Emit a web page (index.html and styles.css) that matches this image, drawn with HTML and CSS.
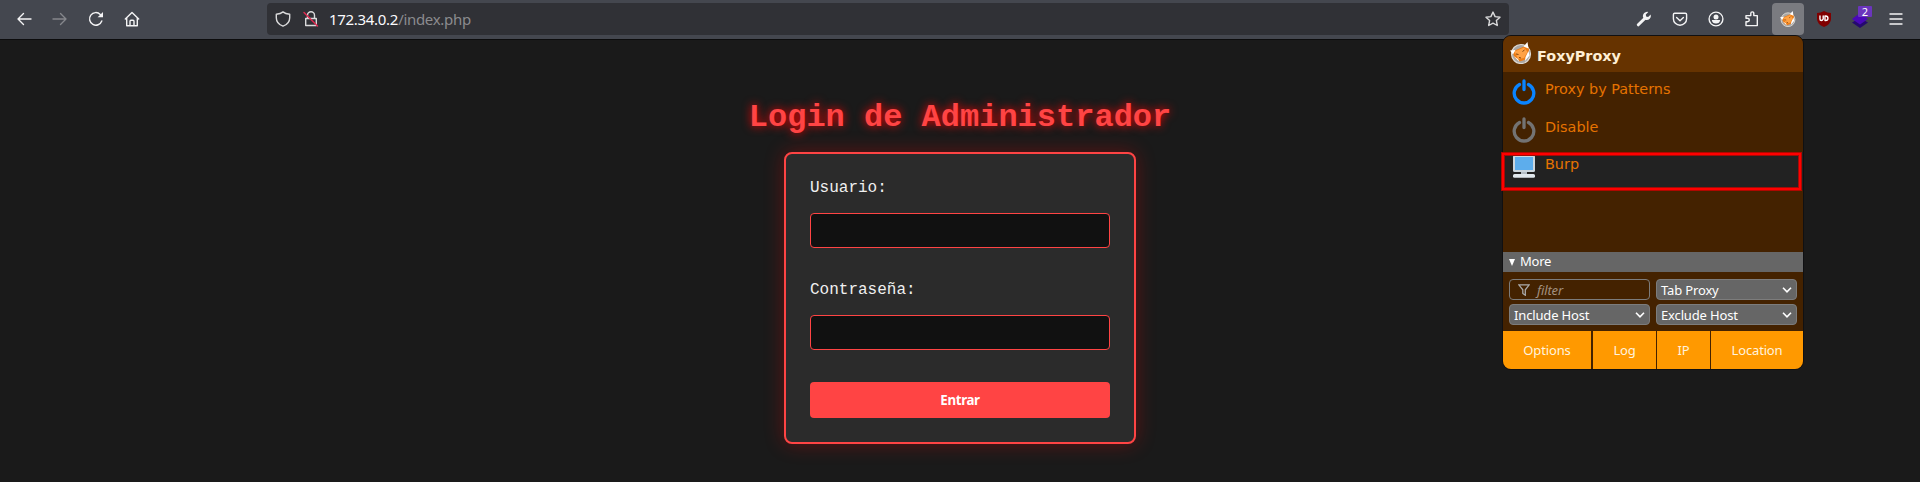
FILE: index.html
```html
<!DOCTYPE html>
<html lang="es">
<head>
<meta charset="utf-8">
<title>Login de Administrador</title>
<link rel="stylesheet" href="styles.css">
</head>
<body>
<header class="toolbar">
  <nav class="nav">
    <svg class="ico" viewBox="0 0 16 16"><path d="M15 8H2M7.500 2.500L2 8l5.500 5.500"/></svg>
    <svg class="ico dim" viewBox="0 0 16 16"><path d="M1 8h13M8.500 2.500L14 8l-5.500 5.500"/></svg>
    <svg class="ico" viewBox="0 0 16 16"><path d="M13.800 10A6.300 6.300 0 1 1 12.300 3.400"/><path class="solid" d="M15 1v5.200H9.600z"/></svg>
    <svg class="ico" viewBox="0 0 16 16"><path d="M1.300 8L8 1.500 14.700 8M2.700 7v7.700h10.600V7M6 14.500V10.300q0-1 1-1h2q1 0 1 1v4.200"/></svg>
  </nav>
  <div class="urlbar">
    <svg class="ico" viewBox="0 0 16 16"><path d="M8 .9C6 2.600 4 3 1.300 3.300v3.500C1.300 11 4 13.800 8 15.200c4-1.400 6.700-4.200 6.700-8.400V3.300C12 3 10 2.600 8 .9z"/></svg>
    <svg class="ico lock" viewBox="0 0 16 16"><path d="M4.500 7V4.300a3.500 3.500 0 0 1 7 0V7M2.700 7.500h10.600v7H2.700z"/><path class="strike" d="M1 1.500l13.500 13.500"/></svg>
    <span class="url">172.34.0.2<span class="path">/index.php</span></span>
    <svg class="ico star" viewBox="0 0 16 16"><path d="M8 1.100l2.100 4.500 4.900.6-3.600 3.400.9 4.900L8 12.100l-4.300 2.400.9-4.900L1 6.200l4.900-.6z"/></svg>
  </div>
  <div class="tools">
    <svg class="ico" viewBox="0 0 16 16"><path class="wrench" d="M2.300 13.800L9 7.200"/><path class="solid" d="M14.700 3.600l-2.600 2.300-2-.3-.3-2L12.300 1A4.300 4.300 0 0 0 7 6.200L9.700 9a4.300 4.300 0 0 0 5-5.400z"/></svg>
    <svg class="ico" viewBox="0 0 16 16"><path d="M2.700 2.200h10.600q1.300 0 1.300 1.300v4.200a6.600 6.600 0 0 1-13.200 0V3.500q0-1.300 1.300-1.300zM4.600 6.500L8 9.700l3.400-3.200"/></svg>
    <svg class="ico" viewBox="0 0 16 16"><circle cx="8" cy="8" r="6.900"/><circle class="solid" cx="8" cy="6" r="2.500"/><path class="solid" d="M3.800 9h8.400q-.5 3.500-4.200 3.500T3.800 9z"/></svg>
    <svg class="ico" viewBox="0 0 16 16"><path d="M2 14.600h11.300V4.600H9.800V2.400q0-1.500-1.500-1.500T6.800 2.400v2.200H2v2.700h1.500q1.800 0 1.800 1.700t-1.800 1.700H2z"/></svg>
    <span class="active-tool"><svg class="fox" viewBox="0 0 22 22"><use href="#fox"/></svg></span>
    <svg class="ico" viewBox="0 0 16 16"><path fill="#800000" stroke="none" d="M8 0q3 1.800 7 2v6q0 5-7 8-7-3-7-8V2q4-.2 7-2z"/><path class="ub" d="M4 5v3q0 1.500 1.300 1.500T7.200 8V5M9 5v4.500h.7A2.200 2.200 0 0 0 9.700 5z"/></svg>
    <span class="layers"><svg class="ico" viewBox="0 0 16 16"><path fill="#25096f" stroke="none" d="M0 11.500L8 7l8 4.500L8 17z"/><path fill="#4a08b8" stroke="none" d="M0 8l8-6 8 6-8 5.500z"/></svg><b class="badge">2</b></span>
    <svg class="ico" viewBox="0 0 16 16"><path d="M2 3h12M2 8h12M2 13h12"/></svg>
  </div>
</header>

<main class="page">
  <h1 class="title">Login de Administrador</h1>
  <form class="card">
    <label class="label" for="user">Usuario:</label>
    <input class="field" id="user" type="text">
    <label class="label" for="pass">Contraseña:</label>
    <input class="field" id="pass" type="password">
    <button class="submit" type="button">Entrar</button>
  </form>
</main>

<aside class="panel">
  <div class="panel-head">
    <svg class="fox" viewBox="0 0 22 22">
      <g id="fox">
        <circle cx="11" cy="12" r="9.500" fill="#a9a6a3"/>
        <circle cx="11" cy="12" r="9.500" fill="none" stroke="#dedbd6" stroke-width="1.200"/>
        <path fill="#ee7d16" d="M2 9.500l5-2L14 4.500l3.500-2 1.500 5-.5 6-4 4.500-5 1.500L5 16z"/>
        <path fill="#ffa245" d="M4.500 9.500l9.500-4 3.500 4.500-3.500 6-6 1z"/>
        <path fill="#fff" d="M0 8.500l5.500-.5L3 12.500zM13.500 4.500L17.500 0l1 6.500zM18.500 9l1 4.500-4.500 5.500.5-4zM3.500 14l4.500 3 1.500 3z"/>
        <path fill="none" stroke="#85450c" stroke-width="1" d="M6 12l2.500.5M12.500 9.500l2-1.500M9 15.500l2 .5"/>
      </g>
    </svg>
    <span>FoxyProxy</span>
  </div>
  <ul class="proxies">
    <li class="proxy"><svg class="power blue" viewBox="0 0 24 24"><path d="M7.500 4.500a9.800 9.800 0 1 0 9 0M12 1v8.500"/></svg><span>Proxy by Patterns</span></li>
    <li class="proxy"><svg class="power gray" viewBox="0 0 24 24"><path d="M7.500 4.500a9.800 9.800 0 1 0 9 0M12 1v8.500"/></svg><span>Disable</span></li>
    <li class="proxy selected"><svg class="power pc" viewBox="0 0 24 24"><rect x="1" y="0" width="22" height="17" rx="1.500" fill="#ccd6dd"/><rect x="3" y="2" width="18" height="13" fill="#5dadec"/><path fill="#b5bec5" d="M9 17h6v3H9z"/><rect x="1" y="19" width="22" height="3.700" rx="1.500" fill="#e1e8ed"/></svg><span>Burp</span></li>
  </ul>
  <div class="more"><svg class="tri" viewBox="0 0 6 7"><path d="M0 0h6L3 7z"/></svg><span>More</span></div>
  <div class="controls">
    <div class="control filter"><svg class="funnel" viewBox="0 0 12 12"><path d="M.8.800h10.400L7.300 5.800v5.400L4.800 9.500V5.800z"/></svg>filter</div>
    <div class="control">Tab Proxy<svg class="chev" viewBox="0 0 10 6"><path d="M1 .8l4 4 4-4"/></svg></div>
    <div class="control">Include Host<svg class="chev" viewBox="0 0 10 6"><path d="M1 .8l4 4 4-4"/></svg></div>
    <div class="control">Exclude Host<svg class="chev" viewBox="0 0 10 6"><path d="M1 .8l4 4 4-4"/></svg></div>
  </div>
  <div class="actions"><span>Options</span><span>Log</span><span>IP</span><span>Location</span></div>
  <div class="marker"></div>
</aside>
</body>
</html>
```

FILE: styles.css
```css
* { box-sizing: border-box; }
body { margin: 0; height: 482px; overflow: hidden; background: #1a1a1a; font-family: "Noto Sans", sans-serif; }
svg { display: block; flex: none; }
.toolbar { height: 40px; background: #44474f; border-bottom: 1px solid #0c0c0d; display: flex; padding-top: 3px; }
.nav { display: flex; align-items: center; gap: 20px; height: 32px; width: 267px; padding-left: 16px; }
.ico { width: 16px; height: 16px; fill: none; stroke: #f4f4f5; stroke-width: 1.4; stroke-linecap: round; stroke-linejoin: round; overflow: visible; }
.dim { stroke: #85878c; }
.solid { fill: #f4f4f5; stroke: none; }
.wrench { stroke-width: 3; }
.ub { stroke: #fff; stroke-width: 1.4; }
.urlbar { width: 1242px; height: 32px; background: #303136; border-radius: 4px; display: flex; align-items: center; padding: 0 8px; }
.urlbar .ico { stroke: #dadadb; }
.lock { margin-left: 12px; }
.urlbar .strike { stroke: #e22850; }
.url { color: #fbfbfe; font-size: 15px; letter-spacing: -.3px; margin-left: 10px; line-height: 32px; }
.path { color: #8b8b8e; }
.star { margin-left: auto; }
.tools { display: flex; align-items: center; gap: 20px; height: 32px; margin-left: 127px; }
.active-tool { width: 32px; height: 32px; background: #7a7b80; border-radius: 4px; margin: 0 -8px; display: grid; place-items: center; }
.active-tool .fox { width: 16px; height: 16px; }
.layers { position: relative; }
.badge { position: absolute; left: 6px; top: -5px; width: 14px; height: 11px; background: #6b35bd; color: #fff; font-size: 11px; line-height: 12px; font-weight: 400; text-align: center; border-radius: 1px; }

.page { display: flex; flex-direction: column; align-items: center; padding-top: 60px; }
.title { margin: 0 0 16px; font: bold 32px/36px "Liberation Mono", monospace; color: #ff4444; text-shadow: 0 0 10px #ff0000; }
.card { width: 352px; height: 292px; border: 2px solid #ff4444; border-radius: 8px; background: #2b2b2b; box-shadow: 0 0 20px rgba(255, 0, 0, .3); padding: 25px 24px 24px; display: flex; flex-direction: column; }
.label { font: 16px/18px "Liberation Mono", monospace; color: #f0f0f0; margin-bottom: 16px; }
.field { width: 300px; height: 35px; margin: 0 0 33px; background: #111; border: 1px solid #ff4444; border-radius: 4px; color: #fff; outline: none; }
.submit { height: 36px; margin-top: -1px; border: 0; border-radius: 4px; background: #ff4444; color: #fff; font: bold 13.333px/18px "Noto Sans", sans-serif; letter-spacing: -.35px; }

.panel { position: absolute; left: 1502px; top: 35px; width: 302px; height: 335px; border: 1px solid #101012; border-radius: 9px; background: #442200; color: #fff; font-size: 13px; }
.panel-head { height: 36px; background: #663300; border-radius: 8px 8px 0 0; display: flex; padding: 7px 7px 0; gap: 5px; color: #ffefd5; font: bold 14.4px/26px "DejaVu Sans", sans-serif; }
.panel-head .fox { margin-top: -1px; }
.fox { width: 22px; height: 22px; }
.proxies { list-style: none; margin: 0; padding: 4px 0 0; height: 180px; color: #e67300; font: 14.4px/26px "DejaVu Sans", sans-serif; }
.proxy { height: 38px; display: flex; padding-left: 9px; gap: 9px; }
.power { width: 24px; height: 24px; margin-top: 4px; fill: none; stroke-width: 3.3; stroke-linecap: round; overflow: visible; }
.blue { stroke: #0a84ff; }
.gray { stroke: #737373; }
.pc { margin-top: 3px; }
.selected { background: #222; }
.selected span { margin-top: -1px; }
.more { height: 20px; background: #666; display: flex; align-items: center; padding-left: 6px; gap: 5px; line-height: 18px; letter-spacing: -.25px; }
.more span { margin-top: -2px; }
.tri { width: 6px; height: 7px; fill: #fff; }
.controls { height: 59px; padding: 7px 6px; display: grid; grid-template-columns: 141px 141px; grid-auto-rows: 21px; gap: 4px 6px; letter-spacing: -.15px; }
.control { background: #666; border: 1px solid #7c7c7c; border-radius: 4px; display: flex; align-items: center; justify-content: space-between; padding: 1px 4px 0 4px; line-height: 18px; }
.control.filter { background: none; justify-content: flex-start; padding-left: 8px; gap: 7px; color: #a2907f; font-style: italic; }
.funnel { width: 12px; height: 12px; fill: none; stroke: #aaa; stroke-width: 1.3; }
.chev { width: 10px; height: 6px; fill: none; stroke: #fff; stroke-width: 1.6; }
.actions { display: grid; grid-template-columns: 89px 63px 53px 92px; column-gap: 1px; height: 38px; border-radius: 0 0 8px 8px; overflow: hidden; letter-spacing: -.15px; }
.actions span { background: #ff9900; text-align: center; line-height: 38px; color: #fff3df; }
.actions span:first-child { border-right: 1px solid #442200; }
.marker { position: absolute; left: -1px; top: 117px; width: 299px; height: 37px; border: 2px solid #f00; box-shadow: 0 0 0 1px #b00800, inset 0 0 0 1px #a00c08; }
```
